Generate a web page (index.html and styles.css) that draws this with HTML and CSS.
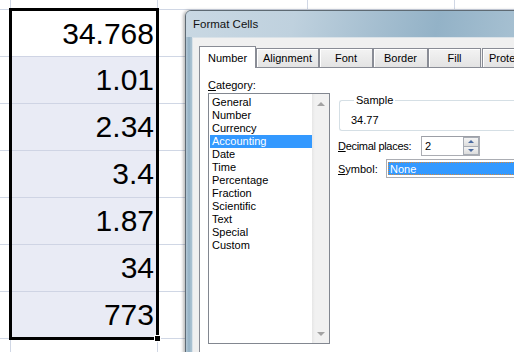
FILE: index.html
```html
<!DOCTYPE html>
<html>
<head>
<meta charset="utf-8">
<link rel="stylesheet" href="styles.css">
</head>
<body>
<div class="sheet">
  <div class="sel">
    <div class="cell active">34.768</div>
    <div class="cell">1.01</div>
    <div class="cell">2.34</div>
    <div class="cell">3.4</div>
    <div class="cell">1.87</div>
    <div class="cell">34</div>
    <div class="cell last">773</div>
    <span class="handle"></span>
  </div>
</div>

<div class="dialog">
  <div class="titlebar">Format Cells</div>
  <div class="client">
    <div class="tabs">
      <div class="tab current">Number</div>
      <div class="tab t-align">Alignment</div>
      <div class="tab t-font">Font</div>
      <div class="tab t-border">Border</div>
      <div class="tab t-fill">Fill</div>
      <div class="tab t-prot">Protection</div>
    </div>
    <div class="panel">
      <div class="cat-col">
        <div class="lbl"><u>C</u>ategory:</div>
        <div class="listbox">
          <ul class="items">
            <li>General</li>
            <li>Number</li>
            <li>Currency</li>
            <li class="chosen">Accounting</li>
            <li>Date</li>
            <li>Time</li>
            <li>Percentage</li>
            <li>Fraction</li>
            <li>Scientific</li>
            <li>Text</li>
            <li>Special</li>
            <li>Custom</li>
          </ul>
          <div class="vscroll">
            <span class="arr up"></span>
            <span class="arr down"></span>
          </div>
        </div>
      </div>
      <div class="opt-col">
        <fieldset class="sample">
          <legend>Sample</legend>
          <div class="sample-val">34.77</div>
        </fieldset>
        <div class="row dec">
          <span class="rlbl w-dec"><u>D</u>ecimal places:</span>
          <div class="spin">
            <span class="spin-val">2</span>
            <div class="spin-btns">
              <span class="sb"><i class="tri-up"></i></span>
              <span class="sb"><i class="tri-dn"></i></span>
            </div>
          </div>
        </div>
        <div class="row sym">
          <span class="rlbl w-sym"><u>S</u>ymbol:</span>
          <div class="combo"><span class="combo-val">None</span></div>
        </div>
      </div>
    </div>
  </div>
</div>
</body>
</html>
```
FILE: styles.css
```css
html, body {
  margin: 0;
  padding: 0;
  width: 514px;
  height: 352px;
  overflow: hidden;
  background: #fff;
}
body {
  position: relative;
  font-family: "Liberation Sans", Arial, sans-serif;
}

/* ---------- spreadsheet ---------- */
.sheet {
  width: 514px;
  height: 352px;
  padding: 8px 0 0 9px;
  box-sizing: border-box;
  background-image:
    linear-gradient(to right,
      transparent 0 10px, #d0d7e5 10px 11px,
      transparent 11px 157px, #d0d7e5 157px 158px,
      transparent 158px 307px, #d0d7e5 307px 308px,
      transparent 308px 454px, #d0d7e5 454px 455px,
      transparent 455px),
    repeating-linear-gradient(to bottom, #d0d7e5 0 1px, transparent 1px 47px);
  background-position: 0 0, 0 9px;
  background-repeat: no-repeat, repeat;
}
.sel {
  position: relative;
  width: 150px;
  border: 3px solid #000;
  box-sizing: border-box;
  background: #e9ebf5;
}
.cell {
  height: 47px;
  box-sizing: border-box;
  border-top: 1px solid #cfd4e4;
  display: flex;
  align-items: center;
  justify-content: flex-end;
  padding-right: 2px;
  font-size: 30px;
  line-height: 1;
  color: #000;
}
.cell.active {
  height: 45px;
  border-top: 0;
  background: #fff;
}
.cell.last {
  height: 46px;
}
.handle {
  position: absolute;
  right: -5px;
  bottom: -5px;
  width: 5px;
  height: 5px;
  background: #000;
  border: 1px solid #fff;
}

/* ---------- dialog ---------- */
.dialog {
  position: absolute;
  left: 185px;
  top: 10px;
  width: 360px;
  height: 360px;
  border: 1px solid #5e6a73;
  border-radius: 6px 6px 0 0;
  box-sizing: border-box;
  background: linear-gradient(to right, #b4c8d6 0, #93b1c4 3px, #a9c1d1 5px, #c4d4df 100%);
  box-shadow: -2px 0 3px rgba(0,0,0,0.25);
  font-size: 11px;
  color: #000;
}
.titlebar {
  height: 26px;
  line-height: 26px;
  padding-left: 7px;
  font-size: 11.5px;
  color: #111;
  border-radius: 5px 5px 0 0;
  background: linear-gradient(100deg, #c9d8e3 0%, #bfd1de 30%, #a3bdcf 55%, #93b2c7 70%, #adc5d5 100%);
}
.client {
  margin-left: 6px;
  height: 330px;
  background: #f0f0f0;
  border-left: 1px solid #d9e2e8;
  border-top: 1px solid #d9e2e8;
  padding: 8px 0 0 6px;
  box-sizing: border-box;
}
.tabs {
  display: flex;
  align-items: flex-end;
  height: 21px;
  position: relative;
  z-index: 1;
}
.tab {
  flex: none;
  height: 19px;
  box-sizing: border-box;
  border: 1px solid #898c95;
  border-bottom: 0;
  background: linear-gradient(#f3f3f3, #e3e3e3);
  box-shadow: inset 1px 1px 0 #fff;
  text-align: center;
  line-height: 18px;
  white-space: nowrap;
  overflow: hidden;
}
.tab.current {
  height: 22px;
  margin-bottom: -1px;
  width: 57px;
  background: #fff;
  box-shadow: none;
  line-height: 22px;
  position: relative;
  z-index: 2;
}
.t-align { width: 63px; }
.t-font { width: 54px; }
.t-border { width: 55px; }
.t-fill { width: 53px; }
.t-prot { width: 80px; margin-left: 1px; text-align: left; padding-left: 6px; }

.panel {
  border: 1px solid #898c95;
  background: #fff;
  height: 300px;
  display: flex;
  gap: 8px;
  padding: 11px 0 0 8px;
  box-sizing: border-box;
}
.lbl {
  height: 14px;
  line-height: 13px;
}
.listbox {
  width: 122px;
  height: 251px;
  border: 1px solid #828790;
  box-sizing: border-box;
  display: flex;
}
.items {
  list-style: none;
  margin: 0;
  padding: 2px 0 0 1px;
  flex: 1;
}
.items li {
  height: 13px;
  line-height: 12px;
  padding-left: 2px;
  color: #000;
}
.items li.chosen {
  background: #3399ff;
  color: #fff;
}
.vscroll {
  width: 17px;
  background: linear-gradient(to right, #e6e6e6, #f1f1f1 3px, #f1f1f1);
  display: flex;
  flex-direction: column;
  justify-content: space-between;
  align-items: center;
  padding: 8px 0 7px;
  box-sizing: border-box;
}
.arr {
  width: 0;
  height: 0;
  border-left: 4px solid transparent;
  border-right: 4px solid transparent;
}
.arr.up { border-bottom: 4px solid #a3a3a3; }
.arr.down { border-top: 4px solid #a3a3a3; }

.opt-col {
  flex: 1;
  padding-top: 15px;
}
.sample {
  margin: 0 0 0 1px;
  padding: 0 0 3px 11px;
  border: 1px solid #d5dfe5;
  border-radius: 3px;
  border-right: 0;
  min-width: 0;
}
.sample legend {
  padding: 0 2px;
  margin-left: 3px;
  line-height: 13px;
}
.sample-val {
  margin-top: 7px;
  line-height: 13px;
}
.row {
  display: flex;
  align-items: center;
}
.row.dec { margin-top: 5px; }
.row.sym { margin-top: 3px; }
.rlbl { flex: none; }
.w-dec { width: 83px; letter-spacing: -0.3px; }
.w-sym { width: 48px; }
.spin {
  width: 59px;
  height: 20px;
  border: 1px solid #abadb3;
  border-top-color: #9c9fa6;
  box-sizing: border-box;
  display: flex;
  align-items: center;
  justify-content: space-between;
  padding-left: 3px;
}
.spin-btns {
  width: 16px;
  height: 18px;
  display: flex;
  flex-direction: column;
}
.sb {
  flex: 1;
  border: 1px solid #a7acb4;
  background: linear-gradient(#f4f4f4, #dcdcdc);
  display: flex;
  align-items: center;
  justify-content: center;
}
.sb + .sb { border-top: 0; }
.tri-up, .tri-dn {
  width: 0; height: 0;
  border-left: 3px solid transparent;
  border-right: 3px solid transparent;
}
.tri-up { border-bottom: 3px solid #4a6aa0; }
.tri-dn { border-top: 3px solid #4a6aa0; }
.combo {
  flex: 1;
  height: 19px;
  border: 1px solid #abadb3;
  border-right: 0;
  box-sizing: border-box;
  padding: 2px 0 2px 1px;
  display: flex;
}
.combo-val {
  flex: 1;
  background: #3399ff;
  color: #fff;
  border: 1px dotted #d88a3c;
  border-right: 0;
  line-height: 12px;
  padding-left: 1px;
}
```
